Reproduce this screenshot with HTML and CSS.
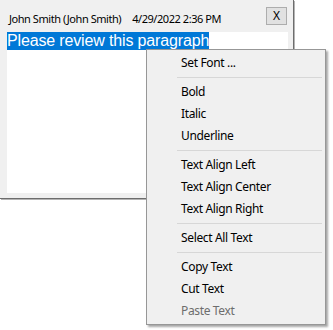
FILE: index.html
```html
<!DOCTYPE html>
<html>
<head>
<meta charset="utf-8">
<link rel="stylesheet" href="styles.css">
</head>
<body>
<div class="window">
  <div class="header">
    <span class="author">John Smith (John Smith)</span>
    <span class="date">4/29/2022 2:36 PM</span>
    <button class="close">X</button>
  </div>
  <div class="editor"><span class="sel">Please review this paragraph</span></div>
</div>
<div class="menu">
  <div class="item">Set Font ...</div>
  <div class="sep"></div>
  <div class="item">Bold</div>
  <div class="item">Italic</div>
  <div class="item">Underline</div>
  <div class="sep"></div>
  <div class="item">Text Align Left</div>
  <div class="item">Text Align Center</div>
  <div class="item">Text Align Right</div>
  <div class="sep"></div>
  <div class="item">Select All Text</div>
  <div class="sep"></div>
  <div class="item">Copy Text</div>
  <div class="item">Cut Text</div>
  <div class="item disabled">Paste Text</div>
</div>
</body>
</html>
```
FILE: styles.css
```css
html, body {
  margin: 0;
  padding: 0;
  background: #ffffff;
}
body {
  width: 333px;
  height: 330px;
  position: relative;
  overflow: hidden;
  font-family: "Noto Sans", "Segoe UI", sans-serif;
  font-size: 12px;
  color: #000;
}
.window {
  width: 281px;
  height: 198px;
  padding: 0 5px 0 7px;
  box-sizing: content-box;
  background: #f0f0f0;
  border-right: 1px solid #6d6d6d;
  border-bottom: 1px solid #6d6d6d;
  box-shadow: 1px 1px 0 #b4b4b4;
  display: flex;
  flex-direction: column;
}
.header {
  height: 32px;
  display: flex;
  align-items: flex-start;
  box-sizing: border-box;
  padding-left: 2px;
  font-size: 11px;
  letter-spacing: -0.45px;
}
.author {
  margin-top: 11px;
  line-height: 16px;
}
.date {
  margin-top: 11px;
  line-height: 16px;
  margin-left: 11px;
}
.close {
  margin-left: auto;
  margin-right: 1px;
  margin-top: 7px;
  width: 21px;
  height: 18px;
  padding: 0;
  border: 1px solid #adadad;
  background: #e1e1e1;
  font-family: "Noto Sans", sans-serif;
  font-size: 12px;
  line-height: 14px;
  letter-spacing: 0;
  color: #000;
}
.editor {
  height: 161px;
  background: #ffffff;
  font-family: "Liberation Sans", Arial, sans-serif;
  font-size: 16px;
  line-height: 18px;
  letter-spacing: -0.15px;
}
.sel {
  background: #0078d7;
  color: #ffffff;
  display: inline-block;
}
.menu {
  position: absolute;
  left: 146px;
  top: 49px;
  width: 174px;
  padding: 2px;
  background: #f0f0f0;
  border: 1px solid #979797;
  box-shadow: 2px 2px 2px rgba(0, 0, 0, 0.35);
  letter-spacing: -0.35px;
}
.item {
  height: 22px;
  line-height: 22px;
  padding-left: 32px;
}
.item.disabled {
  color: #6d6d6d;
}
.sep {
  height: 7px;
  display: flex;
  align-items: center;
  padding-left: 28px;
  padding-right: 1px;
}
.sep::before {
  content: "";
  flex: 1;
  height: 1px;
  background: #d7d7d7;
}
```
